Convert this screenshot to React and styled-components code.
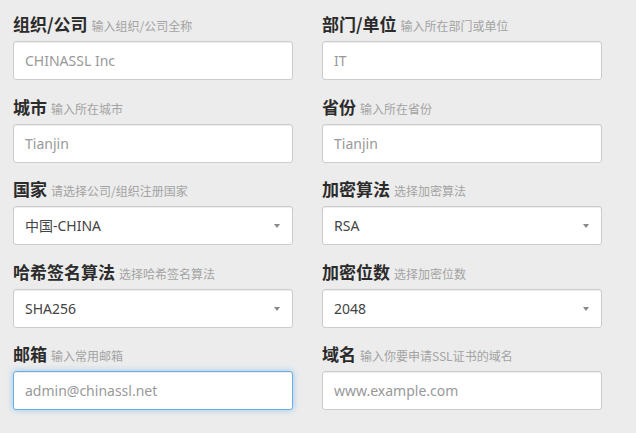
import React from 'react';
import styled, { createGlobalStyle, css } from 'styled-components';

const fields = [
  { label: '组织/公司', hint: '输入组织/公司全称', placeholder: 'CHINASSL Inc' },
  { label: '部门/单位', hint: '输入所在部门或单位', placeholder: 'IT' },
  { label: '城市', hint: '输入所在城市', placeholder: 'Tianjin' },
  { label: '省份', hint: '输入所在省份', placeholder: 'Tianjin' },
  { label: '国家', hint: '请选择公司/组织注册国家', options: ['中国-CHINA'] },
  { label: '加密算法', hint: '选择加密算法', options: ['RSA', 'ECC'] },
  { label: '哈希签名算法', hint: '选择哈希签名算法', options: ['SHA256', 'SHA1'] },
  { label: '加密位数', hint: '选择加密位数', options: ['2048', '4096'] },
  { label: '邮箱', hint: '输入常用邮箱', placeholder: 'admin@chinassl.net', focused: true },
  { label: '域名', hint: '输入你要申请SSL证书的域名', placeholder: 'www.example.com' },
];

const App = () => {
  return (
    <>
      <GlobalStyle />
      <Form>
        {fields.map((f, i) => (
          <Field key={i}>
            <Label>
              {f.label}
              <Hint>{f.hint}</Hint>
            </Label>
            {f.options ? (
              <SelectWrap>
                <Select defaultValue={f.options[0]}>
                  {f.options.map((o) => (
                    <option key={o}>{o}</option>
                  ))}
                </Select>
                <Caret />
              </SelectWrap>
            ) : (
              <Input
                type="text"
                placeholder={f.placeholder}
                $focused={f.focused}
                autoFocus={f.focused}
              />
            )}
          </Field>
        ))}
      </Form>
    </>
  );
};

const GlobalStyle = createGlobalStyle`
  html, body {
    margin: 0;
    padding: 0;
    background: #ececec;
    font-family: "Noto Sans", "Noto Sans CJK SC", sans-serif;
  }
`;

const Form = styled.div`
  display: grid;
  grid-template-columns: 280px 280px;
  column-gap: 29px;
  padding: 12px 13px 0;
`;

const Field = styled.div`
  display: flex;
  flex-direction: column;
  gap: 5px;
  margin-bottom: 14.5px;
`;

const Label = styled.div`
  height: 24px;
  line-height: 24px;
  font-size: 17px;
  font-weight: 700;
  color: #2b2b2b;
  font-family: "Noto Sans CJK SC", sans-serif;
  white-space: nowrap;
`;

const Hint = styled.span`
  margin-left: 4px;
  font-size: 12px;
  font-weight: 400;
  color: #a3a3a3;
`;

const controlBase = css`
  box-sizing: border-box;
  width: 100%;
  height: 39px;
  padding: 6px 11px;
  border: 1px solid #ccc;
  border-radius: 3px;
  background: #fff;
  font-size: 14px;
  font-family: "Noto Sans", "Noto Sans CJK SC", sans-serif;
  color: #555;
  box-shadow: inset 0 1px 1px rgba(0, 0, 0, 0.075);
  outline: none;
`;

const Input = styled.input`
  ${controlBase}
  caret-color: #333;
  &::placeholder {
    color: #999;
  }
  ${(p) =>
    p.$focused &&
    css`
      border-color: #66afe9;
      box-shadow: inset 0 1px 1px rgba(0, 0, 0, 0.075), 0 0 6px rgba(102, 175, 233, 0.6);
    `}
  &:focus {
    border-color: #66afe9;
    box-shadow: inset 0 1px 1px rgba(0, 0, 0, 0.075), 0 0 6px rgba(102, 175, 233, 0.6);
  }
`;

const SelectWrap = styled.div`
  position: relative;
`;

const Select = styled.select`
  ${controlBase}
  appearance: none;
  -webkit-appearance: none;
  color: #444;
`;

const Caret = styled.span`
  position: absolute;
  right: 13px;
  top: 18px;
  width: 0;
  height: 0;
  border-left: 3.5px solid transparent;
  border-right: 3.5px solid transparent;
  border-top: 4px solid #888;
  pointer-events: none;
`;

export default App;
